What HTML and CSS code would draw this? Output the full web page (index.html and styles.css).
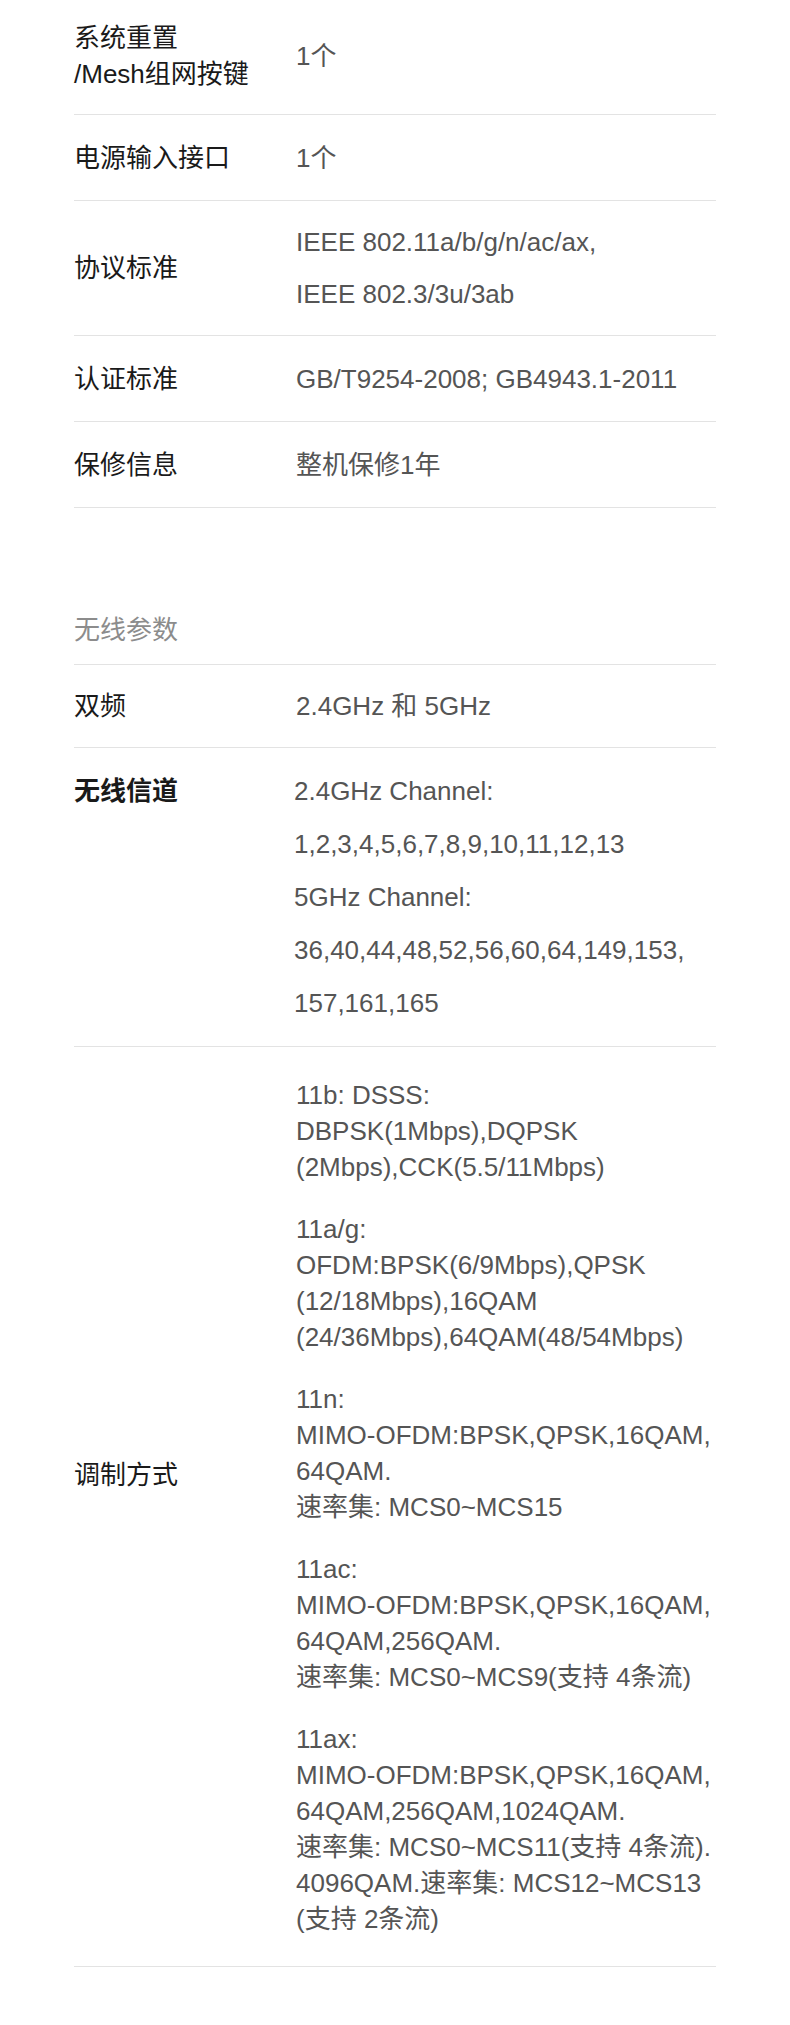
FILE: index.html
```html
<!DOCTYPE html>
<html lang="zh-CN">
  <head>
    <meta charset="UTF-8" />
    <meta name="viewport" content="width=device-width, initial-scale=1.0" />
    <title>规格参数</title>
    <link rel="stylesheet" href="styles.css">
  </head>

  <body>
    <div class="specs">
      <div class="row row-first">
        <div class="label">系统重置<br>/Mesh组网按键</div>
        <div class="value">1个</div>
      </div>
      <div class="row">
        <div class="label">电源输入接口</div>
        <div class="value">1个</div>
      </div>
      <div class="row row-tight">
        <div class="label">协议标准</div>
        <div class="value">IEEE 802.11a/b/g/n/ac/ax,<br>IEEE 802.3/3u/3ab</div>
      </div>
      <div class="row">
        <div class="label">认证标准</div>
        <div class="value">GB/T9254-2008; GB4943.1-2011</div>
      </div>
      <div class="row">
        <div class="label">保修信息</div>
        <div class="value">整机保修1年</div>
      </div>

      <h3 class="section-title">无线参数</h3>

      <div class="row row-tight">
        <div class="label">双频</div>
        <div class="value">2.4GHz 和 5GHz</div>
      </div>
      <div class="row row-top">
        <div class="label label-strong">无线信道</div>
        <div class="value value-shift">
          2.4GHz Channel:<br>
          1,2,3,4,5,6,7,8,9,10,11,12,13<br>
          5GHz Channel:<br>
          36,40,44,48,52,56,60,64,149,153,<br>
          157,161,165
        </div>
      </div>
      <div class="row">
        <div class="label label-raised">调制方式</div>
        <div class="value modes">
          <p>11b: DSSS:<br>DBPSK(1Mbps),DQPSK<br>(2Mbps),CCK(5.5/11Mbps)</p>
          <p>11a/g:<br>OFDM:BPSK(6/9Mbps),QPSK<br>(12/18Mbps),16QAM<br>(24/36Mbps),64QAM(48/54Mbps)</p>
          <p>11n:<br>MIMO-OFDM:BPSK,QPSK,16QAM,<br>64QAM.<br>速率集: MCS0~MCS15</p>
          <p>11ac:<br>MIMO-OFDM:BPSK,QPSK,16QAM,<br>64QAM,256QAM.<br>速率集: MCS0~MCS9(支持 4条流)</p>
          <p>11ax:<br>MIMO-OFDM:BPSK,QPSK,16QAM,<br>64QAM,256QAM,1024QAM.<br>速率集: MCS0~MCS11(支持 4条流).<br>4096QAM.速率集: MCS12~MCS13<br>(支持 2条流)</p>
        </div>
      </div>
    </div>
  </body>
</html>
```

FILE: styles.css
```css
body {
  font-family: "Liberation Sans", "Noto Sans CJK SC", sans-serif;
  background-color: #fff;
  margin: 0;
  padding: 0;
}

.specs {
  margin: 0 74px;
}

.row {
  display: flex;
  align-items: center;
  padding: 16.5px 0;
  border-bottom: 1px solid #e3e3e3;
}

.row-first {
  padding: 20px 0 22px;
}

.row-tight {
  padding: 15px 0;
}

.row-top {
  align-items: flex-start;
}

.label {
  width: 222px;
  flex-shrink: 0;
  font-size: 26px;
  line-height: 36px;
  color: #1a1a1a;
}

.label-strong {
  font-weight: bold;
  line-height: 53px;
}

.label-raised {
  margin-bottom: 63px;
}

.value {
  font-size: 26px;
  line-height: 52px;
  color: #555;
  white-space: nowrap;
}

.value-shift {
  margin-left: -2px;
  line-height: 53px;
}

.section-title {
  margin: 0;
  padding: 104px 0 16px;
  font-size: 26px;
  font-weight: normal;
  line-height: 36px;
  color: #8c8c8c;
  border-bottom: 1px solid #e3e3e3;
}

/* modulation list */
.modes {
  padding: 13px 0;
}

.modes p {
  margin: 0 0 26px;
  line-height: 36px;
}

.modes p:last-child {
  margin-bottom: 0;
}
```
